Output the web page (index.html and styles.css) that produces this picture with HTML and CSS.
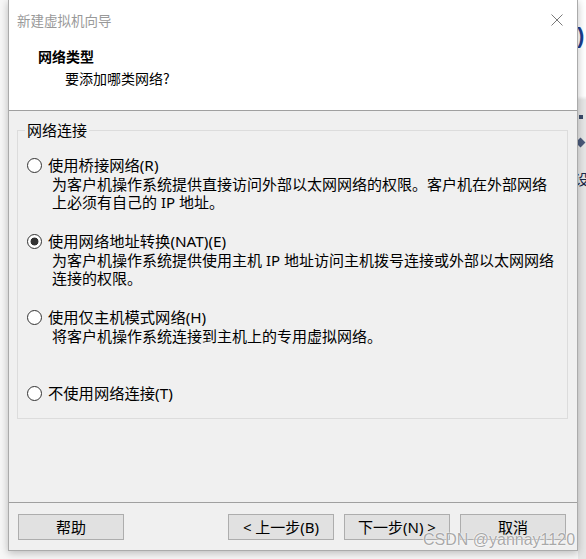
FILE: index.html
```html
<!DOCTYPE html>
<html lang="zh-CN">
<head>
<meta charset="utf-8">
<title>新建虚拟机向导</title>
<link rel="stylesheet" href="styles.css">
</head>
<body>
<div class="screen">
  <div class="window">
    <div class="header">
      <div class="titlebar">
        <span class="title">新建虚拟机向导</span>
        <svg class="close" width="12" height="12" viewBox="0 0 12 12"><path d="M0.5 0.5 L11.5 11.5 M11.5 0.5 L0.5 11.5" stroke="#7a7a7a" stroke-width="1" fill="none"/></svg>
      </div>
      <div class="heading">网络类型</div>
      <div class="subheading">要添加哪类网络?</div>
    </div>
    <div class="content">
      <fieldset class="group">
        <legend>网络连接</legend>
        <div class="options">
          <div class="option">
            <div class="radio-row"><span class="radio"></span><span>使用桥接网络(R)</span></div>
            <div class="desc">为客户机操作系统提供直接访问外部以太网网络的权限。客户机在外部网络<br>上必须有自己的 IP 地址。</div>
          </div>
          <div class="option">
            <div class="radio-row"><span class="radio checked"></span><span>使用网络地址转换(NAT)(E)</span></div>
            <div class="desc">为客户机操作系统提供使用主机 IP 地址访问主机拨号连接或外部以太网网络<br>连接的权限。</div>
          </div>
          <div class="option">
            <div class="radio-row"><span class="radio"></span><span>使用仅主机模式网络(H)</span></div>
            <div class="desc">将客户机操作系统连接到主机上的专用虚拟网络。</div>
          </div>
          <div class="option last">
            <div class="radio-row"><span class="radio"></span><span>不使用网络连接(T)</span></div>
          </div>
        </div>
      </fieldset>
    </div>
    <div class="footer">
      <button class="btn">帮助</button>
      <div class="nav">
        <button class="btn">&lt; 上一步(B)</button>
        <button class="btn">下一步(N) &gt;</button>
        <button class="btn cancel">取消</button>
      </div>
    </div>
    <div class="watermark">CSDN @yannay1120</div>
  </div>
  <div class="backdrop">
    <span class="bd-paren">)</span>
    <span class="bd-dot"></span>
    <span class="bd-diamond"></span>
    <span class="bd-char">设</span>
  </div>
</div>
</body>
</html>
```
FILE: styles.css
```css
* { box-sizing: border-box; }
html, body { margin: 0; padding: 0; }
body {
  background: #f7f7f7;
  font-family: "Noto Sans", "Noto Sans CJK SC", sans-serif;
  font-size: 15px;
  color: #000;
  width: 586px;
  height: 559px;
  overflow: hidden;
}
.screen {
  display: flex;
  height: 559px;
  padding-left: 8px;
}
.window {
  position: relative;
  width: 570px;
  height: 551px;
  background: #f0f0f0;
  border: 1px solid #ababab;
  border-top: none;
  box-shadow: 0 2px 8px rgba(0,0,0,0.25);
  display: flex;
  flex-direction: column;
  z-index: 1;
}
.header {
  background: #fff;
  height: 111px;
  border-bottom: 1px solid #a0a0a0;
}
.titlebar {
  height: 40px;
  display: flex;
  align-items: center;
  justify-content: space-between;
  padding: 0 14px 1px 8px;
}
.title {
  font-family: "Noto Sans CJK SC", sans-serif;
  font-size: 13.5px;
  color: #999;
}
.close { display: block; }
.heading {
  margin-top: 5px;
  padding-left: 29px;
  font-family: "Noto Sans CJK SC", sans-serif;
  font-weight: bold;
  font-size: 14px;
  line-height: 22px;
}
.subheading {
  padding-left: 56px;
  font-family: "Noto Sans CJK SC", sans-serif;
  font-size: 14px;
  line-height: 22px;
}
.content {
  flex: 1;
  padding: 9px 9px 0 8px;
}
.group {
  margin: 0;
  padding: 0 0 15px 7px;
  border: 1px solid #dcdcdc;
  min-width: 0;
}
.group legend {
  padding: 0 2px;
  font-size: 15px;
  line-height: 20px;
}
.options { margin-top: 15px; }
.option + .option { margin-top: 20px; }
.option.last { margin-top: 38px; }
.radio-row {
  display: flex;
  align-items: center;
  gap: 6px;
  height: 20px;
  line-height: 20px;
  font-size: 15.3px;
}
.radio {
  width: 15px;
  height: 15px;
  margin-left: 2px;
  border-radius: 50%;
  border: 1px solid #333;
  background: #fff;
  flex: none;
}
.radio.checked {
  background: radial-gradient(circle, #333 0, #333 3.6px, #fff 4.3px);
}
.desc {
  padding-left: 27px;
  line-height: 18px;
}
.footer {
  height: 48px;
  border-top: 1px solid #a0a0a0;
  padding: 11px 11px 0 9px;
  display: flex;
  align-items: flex-start;
}
.nav {
  margin-left: auto;
  display: flex;
  gap: 10px;
}
.btn {
  width: 106px;
  height: 26px;
  padding: 0;
  background: #e1e1e1;
  border: 1px solid #adadad;
  font-family: "Noto Sans", "Noto Sans CJK SC", sans-serif;
  font-size: 15px;
  color: #000;
  line-height: 22px;
}
.watermark {
  position: absolute;
  left: 414px;
  top: 531px;
  white-space: nowrap;
  font-family: "Liberation Sans", sans-serif;
  font-size: 16px;
  line-height: 18px;
  color: rgba(140,140,140,0.75);
  text-shadow: 0 0 1px #fff, 0 0 2px #fff;
}
.backdrop {
  flex: 1;
  position: relative;
  background: linear-gradient(#fff 0, #fff 96px, #e6e6e6 100px, #e6e6e6 100%);
  overflow: hidden;
  display: flex;
  flex-direction: column;
}
.bd-paren {
  margin-top: 24px;
  margin-left: -1px;
  font-family: "Liberation Sans", sans-serif;
  font-weight: bold;
  font-size: 22px;
  color: #1b3f8f;
  line-height: 24px;
}
.bd-dot {
  margin-top: 67px;
  margin-left: 1px;
  width: 4px;
  height: 4px;
  background: #3a4a6a;
}
.bd-diamond {
  margin-top: 20px;
  margin-left: -1px;
  width: 7px;
  height: 7px;
  background: #4a5a7a;
  transform: rotate(45deg);
}
.bd-char {
  margin-top: 24px;
  margin-left: -4px;
  font-family: "Noto Sans CJK SC", sans-serif;
  font-size: 15px;
  line-height: 18px;
  color: #1a2a4a;
}
```
